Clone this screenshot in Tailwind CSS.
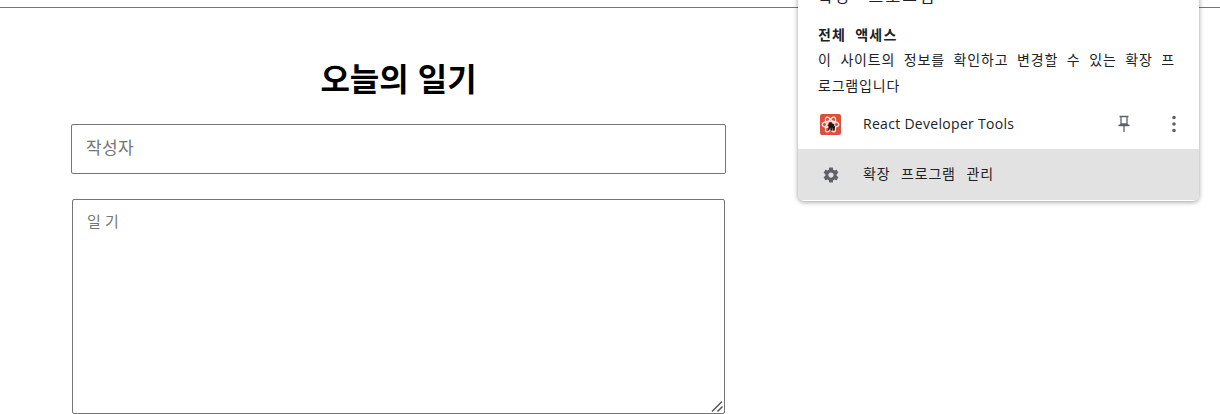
<!DOCTYPE html>
<html lang="ko">
<head>
  <meta charset="UTF-8">
  <title>오늘의 일기</title>
  <script src="https://cdn.jsdelivr.net/npm/@tailwindcss/browser@4"></script>
</head>
<body class="relative h-[414px] overflow-hidden bg-white font-['Noto_Sans_CJK_KR',sans-serif]">
  <div class="h-2 border-b border-[#777]"></div>

  <main class="w-[655px] ml-[71px] flex flex-col">
    <h1 class="h-[116px] pt-[45px] text-center text-[32px] leading-[48px] font-bold text-black">오늘의 일기</h1>
    <input type="text" placeholder="작성자" class="w-full h-[50px] px-[14px] pb-[6px] border border-[#767676] rounded-[2px] text-[17px] tracking-[0.4px] text-black placeholder:text-[#757575] outline-none">
    <div class="relative mt-[25px] ml-px w-[653px] h-[215px]">
      <textarea placeholder="일 기" class="block w-full h-full resize-none px-[14px] py-[10px] border border-[#767676] rounded-[2px] text-[15px] leading-[22px] placeholder:text-[#757575] outline-none"></textarea>
      <svg class="absolute right-[2px] bottom-[2px] w-[12px] h-[12px]" viewBox="0 0 12 12" fill="none" stroke="#555" stroke-width="1.500">
        <path d="M1 11.500 11 1.500M6.500 11.500 11.500 6.500"/>
      </svg>
    </div>
  </main>

  <!-- extension popup -->
  <div class="absolute top-[-30px] left-[798px] w-[401px] h-[231px] bg-white rounded-b-[6px] shadow-[0_1px_5px_rgba(0,0,0,0.4)] overflow-hidden flex flex-col text-[#202124]">
    <div class="h-[52px] pl-5 pt-[13px] text-[16px] leading-6 tracking-[2.2px] [word-spacing:10px]">확장 프로그램</div>
    <div class="pl-5 pr-[18px] text-[14px] leading-[26px]">
      <div class="font-bold leading-[24px] h-[24px] tracking-[1.2px] [word-spacing:4px]">전체 액세스</div>
      <p class="break-all tracking-[0.8px] [word-spacing:4px]">이 사이트의 정보를 확인하고 변경할 수 있는 확장 프로그램입니다</p>
    </div>
    <div class="h-[50px] mt-[1px] flex items-center pl-[22px] pr-[23px] text-[14px]">
      <svg class="w-[21px] h-[21px] shrink-0" viewBox="0 0 20 20">
        <rect width="20" height="20" rx="2" fill="#d9503f"/>
        <g fill="none" stroke="#fff" stroke-width="1.200" opacity="0.9">
          <ellipse cx="10" cy="10" rx="8" ry="3.200"/>
          <ellipse cx="10" cy="10" rx="8" ry="3.200" transform="rotate(60 10 10)"/>
          <ellipse cx="10" cy="10" rx="8" ry="3.200" transform="rotate(120 10 10)"/>
        </g>
        <path d="M9 8h2l.6 1.500H14l-.8 1.300 1.300 1-.8 3.700h-1.200l-.5-2.500-.8 3h-1.400l.2-3-1.500 2.500H7.300l1-3.500-1.500-1 1.500-.8z" fill="#1a1a1a"/>
      </svg>
      <span class="ml-[22px] pb-[2px] flex-1 font-['Open_Sans',sans-serif] text-[14px] tracking-[0.3px]">React Developer Tools</span>
      <svg class="w-4 h-[18px] mr-[40px]" viewBox="0 0 16 18" fill="none" stroke="#5f6368" stroke-width="1.300">
        <path d="M3.500 1.500h9M5 1.500v7.500M11 1.500v7.500M2.500 10.500c1-.3 2-.7 2.500-1.500h6c.5.8 1.500 1.200 2.500 1.500zM8 10.500v6.500"/>
      </svg>
      <svg class="w-1 h-[18px]" viewBox="0 0 4 18" fill="#5f6368">
        <circle cx="2" cy="2.500" r="1.800"/><circle cx="2" cy="9" r="1.800"/><circle cx="2" cy="15.500" r="1.800"/>
      </svg>
    </div>
    <div class="h-[51px] bg-[#e2e2e2] flex items-center pl-[24px] text-[14px]">
      <svg class="w-[18px] h-[18px] shrink-0" viewBox="0 0 24 24" fill="#5f6368">
        <path d="M19.430 12.980c.04-.32.07-.64.07-.98s-.03-.66-.07-.98l2.110-1.650c.19-.15.24-.42.120-.64l-2-3.460c-.12-.22-.39-.3-.61-.22l-2.490 1c-.52-.4-1.080-.73-1.690-.98l-.38-2.650C14.460 2.180 14.250 2 14 2h-4c-.25 0-.46.18-.49.42l-.38 2.650c-.61.25-1.170.59-1.690.98l-2.490-1c-.23-.09-.49 0-.61.22l-2 3.460c-.13.22-.07.49.12.64l2.110 1.650c-.04.32-.07.65-.07.98s.03.66.07.98l-2.110 1.650c-.19.15-.24.42-.12.64l2 3.460c.12.22.39.3.61.22l2.490-1c.52.4 1.080.73 1.690.98l.38 2.650c.03.24.24.42.49.42h4c.25 0 .46-.18.49-.42l.38-2.650c.61-.25 1.170-.59 1.690-.98l2.490 1c.23.09.49 0 .61-.22l2-3.460c.12-.22.07-.49-.12-.64l-2.110-1.650zM12 15.500c-1.930 0-3.500-1.570-3.500-3.500s1.570-3.500 3.500-3.500 3.500 1.570 3.500 3.500-1.570 3.500-3.500 3.500z"/>
      </svg>
      <span class="ml-[23px] pb-[2px] tracking-[0.8px] [word-spacing:6px]">확장 프로그램 관리</span>
    </div>
  </div>
</body>
</html>
